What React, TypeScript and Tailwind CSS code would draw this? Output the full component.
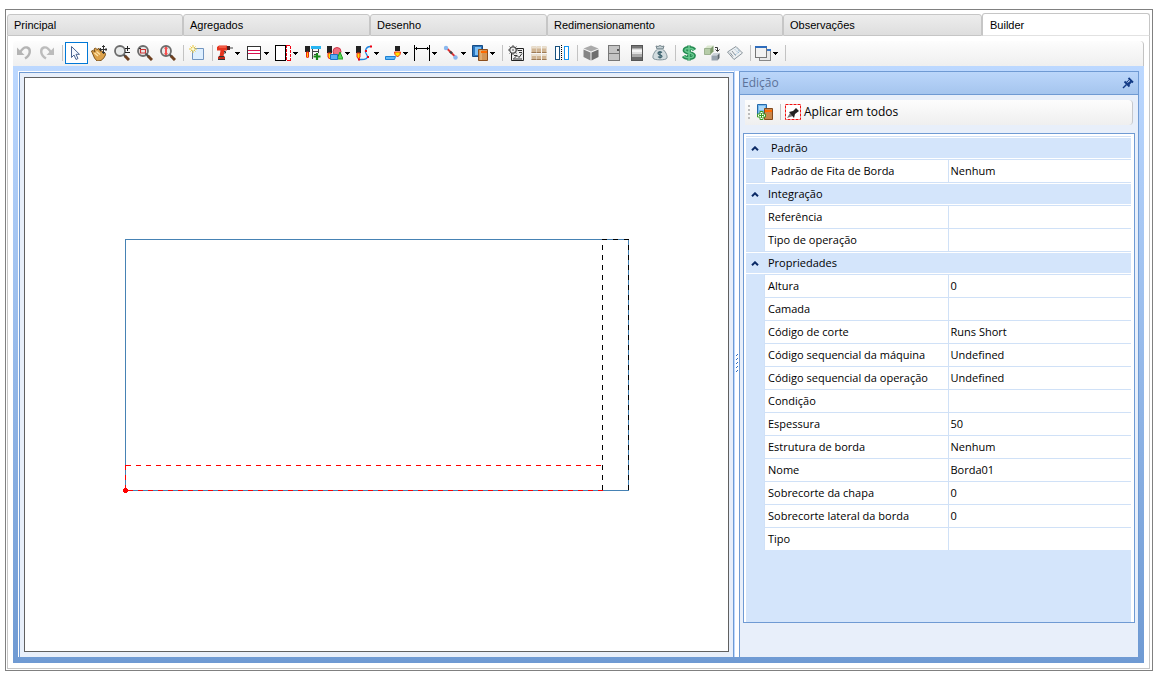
import React from "react";

type Tool = {
    name: string;
    icon?: React.ReactNode;
    menu?: boolean;
    active?: boolean;
};

const Icon = ({ children, crisp }: { children: React.ReactNode; crisp?: boolean }) => (
    <svg
        width="16"
        height="16"
        viewBox="0 0 16 16"
        fill="none"
        className="shrink-0"
        shapeRendering={crisp ? "crispEdges" : "auto"}
        aria-hidden="true"
    >
        {children}
    </svg>
);

const Lens = ({ children }: { children?: React.ReactNode }) => (
    <Icon>
        <path d="M9.5 9.5l2 2" stroke="#444" strokeWidth="2.400" />
        <path d="M11 11l4 4" stroke="#6e4020" strokeWidth="3" />
        <circle cx="6" cy="6" r="5" fill="#e8eaea" stroke="#6c6c6c" strokeWidth="1.800" />
        {children}
    </Icon>
);

// Small black tool head shared by the machining icons
const Head = ({ x, y }: { x: number; y: number }) => (
    <>
        <path d={`M${x} ${y}h5v7h-5z`} fill="#222" />
        <path d={`M${x + 1} ${y + 7}h3v4l-1.5 2l-1.5 -2z`} fill="#fd0" stroke="#f02010" strokeWidth="1" />
    </>
);

const tools: (Tool | null)[] = [
    {
        name: "Desfazer",
        icon: (
            <Icon>
                <path d="M4 7.5C6.500 3 9 2 11 2.500C15 3.500 15 10 9 13.500" stroke="#b4b4b4" strokeWidth="2.400" />
                <path d="M1 2.500v7.500h7.500z" fill="#b4b4b4" />
            </Icon>
        ),
    },
    {
        name: "Refazer",
        icon: (
            <Icon>
                <path d="M12 7.500C9.500 3 7 2 5 2.500C1 3.500 1 10 7 13.500" stroke="#bcbcbc" strokeWidth="2.400" />
                <path d="M15 2.500v7.500h-7.500z" fill="#bcbcbc" />
            </Icon>
        ),
    },
    null,
    {
        name: "Selecionar",
        active: true,
        icon: (
            <Icon>
                <path d="M3.500 1.500v11l2.500-2.500l2 4.500l2-1l-2-4.200h3.500z" fill="#f4f8ff" stroke="#4a6490" />
            </Icon>
        ),
    },
    {
        name: "Mover",
        icon: (
            <Icon>
                <path
                    d="M.5 6l1.500-.5l2 1.500l-1-3l1.500-1l2 2l.5-1.500l1.500.3l.8 2.500l1.700-.5l.7 1.500l2.300.5l.5 2l-1.500 3l-3 2.700l-4 .5l-2.500-3z"
                    fill="#dda24a"
                    stroke="#7f541c"
                />
                <path d="M3.500 8l3.500 3M5.500 6.500l3.500 3" stroke="#ffe3a8" strokeWidth="1.300" />
                <path d="M12.500 .5v8M8.500 4.500h8" stroke="#333" />
                <path d="M11 2l1.500-1.500L14 2M11 7l1.500 1.500L14 7M10 3L8.500 4.500L10 6M14.500 3L16 4.500L14.500 6" stroke="#333" />
            </Icon>
        ),
    },
    {
        name: "Zoom",
        icon: (
            <Lens>
                <path d="M11 3.500h5M13.500 1v5M11 7.500h5" stroke="#222" />
            </Lens>
        ),
    },
    {
        name: "Zoom na janela",
        icon: (
            <Lens>
                <path d="M3.500 4.500h5v3.500h-5z" stroke="#cc3434" strokeWidth="1.200" />
                <path d="M2 3.500h2M8 9h2" stroke="#333" />
            </Lens>
        ),
    },
    {
        name: "Zoom total",
        icon: (
            <Lens>
                <path d="M6 2v8" stroke="#f65050" strokeWidth="2" />
                <path d="M4 4l2-2.500L8 4zM4 8l2 2.500L8 8z" fill="#f65050" />
            </Lens>
        ),
    },
    null,
    {
        name: "Novo",
        icon: (
            <Icon>
                <path d="M3.500 3.500h11v11h-11z" fill="#deefff" stroke="#7295c0" />
                <path d="M4 0v8M0 4h8M1.500 1.500l5 5M6.500 1.500l-5 5" stroke="#e9c63b" />
                <circle cx="4" cy="4" r="1.500" fill="#fffbd0" />
            </Icon>
        ),
    },
    null,
    {
        name: "Furação",
        menu: true,
        icon: (
            <Icon>
                <path d="M0 2l2-1.500h8v5H7.500l-1 6H2.500l1-6H0z" fill="#e5341e" />
                <path d="M2 2h7" stroke="#ff8068" />
                <path d="M10 1h3v4h-3z" fill="#4a2020" />
                <path d="M13 3h3" stroke="#777" strokeWidth="1.400" />
                <path d="M1 11.500h7V15H1z" fill="#c42a1a" />
                <path d="M1 14.500h7M2 11.500h5" stroke="#333" />
                <path d="M7 6.500h1.500v1.500H7" stroke="#333" />
            </Icon>
        ),
    },
    {
        name: "Fita de borda",
        menu: true,
        icon: (
            <Icon crisp>
                <path d="M1.500 1.500h13v13h-13z" fill="#fff" stroke="#333" />
                <path d="M2 5.500h12M2 8.500h12" stroke="#d81050" />
            </Icon>
        ),
    },
    {
        name: "Borda lateral",
        menu: true,
        icon: (
            <Icon crisp>
                <path d="M.5 .5h10v15H.5z" fill="#fff" stroke="#000" />
                <path d="M11.500 .5h4v15h-4z" fill="#fff" stroke="#f00010" strokeDasharray="3 1" />
            </Icon>
        ),
    },
    {
        name: "Adicionar operação",
        icon: (
            <Icon>
                <path d="M0 1h5v6H0z" fill="#222" />
                <path d="M1.500 7h2v5l-1 1l-1-1z" fill="#fc0" stroke="#f02010" />
                <path d="M6 1h10v3H6z" fill="#28b5f2" />
                <path d="M7.500 4v10M13.500 4v4M7 6.500h7M9 9.500h3" stroke="#444" />
                <path d="M12 8v7M8.500 11.500h7" stroke="#188a18" strokeWidth="2.200" />
            </Icon>
        ),
    },
    {
        name: "Formas",
        menu: true,
        icon: (
            <Icon>
                <circle cx="10" cy="6.500" r="4" fill="#f07080" stroke="#d23848" />
                <path d="M10 14l3-7l3 7z" fill="#55d855" stroke="#229b22" />
                <Head x={0} y={1} />
                <path d="M3.500 9.500h7v5h-7z" fill="#5aaef5" stroke="#1b72c5" />
            </Icon>
        ),
    },
    {
        name: "Contorno",
        menu: true,
        icon: (
            <Icon>
                <path d="M2.500 14.500h3c4 0 6-1 6-3c0-2-3-3-2-6c.5-2 2-4 5-4" stroke="#2384dc" strokeWidth="1.300" />
                <Head x={0} y={1} />
                <path d="M2 13.500h2v2H2zM11 11h2v2h-2zM9 5h2v2H9zM14 .5h2v2h-2z" fill="#f00010" />
            </Icon>
        ),
    },
    {
        name: "Rebaixo",
        menu: true,
        icon: (
            <Icon>
                <path d="M.5 11.500h10l-1 3H.5z" fill="#60b8f8" stroke="#1c80d2" />
                <path d="M10 1h5v5h-5z" fill="#222" />
                <path d="M9.500 7h6l-.5 2.500l-2.500 2.500l-2.500-2.500z" fill="#ffe600" stroke="#f03010" />
            </Icon>
        ),
    },
    {
        name: "Cota",
        menu: true,
        icon: (
            <Icon crisp>
                <path d="M.5 0v16M15.500 0v16M1 3.500h14" stroke="#000" />
                <path d="M2.500 2v3M13.500 2v3" stroke="#000" />
            </Icon>
        ),
    },
    {
        name: "Linha",
        menu: true,
        icon: (
            <Icon>
                <path d="M4 3.500l8 8" stroke="#e03030" strokeWidth="1.800" />
                <circle cx="3" cy="3" r="2.200" fill="#8ab8ee" />
                <circle cx="12.500" cy="12.500" r="2.200" fill="#8ab8ee" />
                <path d="M7 6.500l2 2" stroke="#444" strokeWidth="2.400" />
            </Icon>
        ),
    },
    {
        name: "Painéis",
        menu: true,
        icon: (
            <Icon>
                <path d="M.5 .5h10v11H.5z" fill="#2b75bd" stroke="#174c85" />
                <path d="M3 2h6v8H3z" fill="#7fc1f5" />
                <path d="M6.500 4.500h9v11h-9z" fill="#d39555" stroke="#8a4d1c" />
                <path d="M9 5v10" stroke="#efc48d" />
                <path d="M9 7h6" stroke="#ff6a00" strokeWidth="2" />
            </Icon>
        ),
    },
    null,
    {
        name: "Configurar",
        icon: (
            <Icon>
                <path d="M3.500 3.500h12v12h-12z" fill="#eee" stroke="#222" />
                <path d="M10 5.500h4M11 7.500h3M6 13.500l3-3l2 2l3-4M6 10.500h3M5 14h9" stroke="#333" />
                <circle cx="5" cy="5" r="3.200" fill="#eee" stroke="#555" strokeWidth="1.300" />
                <path d="M5 0v2M5 8v2M0 5h2M8 5h2M1.500 1.500l1.300 1.300M7 7l1.500 1.500M8.500 1.500L7 3M1.500 8.500L3 7" stroke="#555" />
                <circle cx="5" cy="5" r="1" fill="#888" />
            </Icon>
        ),
    },
    {
        name: "Blocos",
        icon: (
            <Icon>
                <path d="M.5 1.500h4.500V8H.5zM5.500 1.500H10V8H5.500zM11 1.500h4.500V8H11zM.5 9h4.500v6H.5zM5.500 9H10v6H5.500zM11 9h4.500v6H11z" fill="#d0b594" />
                <path d="M.5 2.500H5M5.500 2.500H10M11 2.500h4.500M.5 10H5M5.500 10H10M11 10h4.500" stroke="#eadfce" strokeWidth="2" />
                <path d="M.5 7.500H5M5.500 7.500H10M11 7.500h4.500M.5 14.500H5M5.500 14.500H10M11 14.500h4.500" stroke="#9c7a56" />
            </Icon>
        ),
    },
    {
        name: "Espelhar",
        icon: (
            <Icon crisp>
                <path d="M1.500 1.500h4v13h-4z" fill="#fff" stroke="#16507e" />
                <path d="M10.500 1.500h4v13h-4z" fill="#fff" stroke="#1493f0" />
                <path d="M7.500 0v16" stroke="#000" strokeDasharray="1 1" />
            </Icon>
        ),
    },
    null,
    {
        name: "Módulo 3D",
        icon: (
            <Icon>
                <path d="M8 .5l7.500 3L8 6.500l-7.500-3z" fill="#aaa" />
                <path d="M.5 4.500l7 3v8l-7-3.500z" fill="#858585" />
                <path d="M8.500 7.500l7-3V12l-7 3.500z" fill="#6f6f6f" />
            </Icon>
        ),
    },
    {
        name: "Porta",
        icon: (
            <Icon crisp>
                <path d="M2.500 .5h11v15h-11z" fill="#c4c4c4" stroke="#777" />
                <path d="M3 8.500h10" stroke="#777" />
                <path d="M11 4h2v2h-2z" fill="#555" />
            </Icon>
        ),
    },
    {
        name: "Perfil",
        icon: (
            <Icon crisp>
                <path d="M2.500 .5h11v15h-11z" fill="#aaa" stroke="#555" />
                <path d="M3 1h10v2H3z" fill="#777" />
                <path d="M3 4h10v5H3z" fill="#dedede" />
                <path d="M3 5h10v2H3z" fill="#f5f5f5" />
                <path d="M3 12h10v3H3z" fill="#696969" />
            </Icon>
        ),
    },
    {
        name: "Custos",
        icon: (
            <Icon>
                <path d="M5 4L4 1l2 .5L8 .5l2 1l2-.5l-1 3z" fill="#c4d0d4" stroke="#76868c" />
                <path d="M5.500 4h5c3 2.500 5 6 4.500 9c-.5 2.500-13.500 2.500-14 0c-.5-3 1.500-6.500 4.500-9z" fill="#d2dcdf" stroke="#81939a" />
                <path d="M10 7.500c-1-1-4-1-4 .7s4 1.300 4 3s-3 1.500-4 .5M8 6v7.500" stroke="#345b68" strokeWidth="1.200" />
            </Icon>
        ),
    },
    null,
    {
        name: "Preço",
        icon: (
            <Icon>
                <path d="M13.500 5C12 2.300 3.500 2 3.500 5.200S13 7.500 13 10.800S4 13.500 2.500 11M8 .5v15" stroke="#248a51" strokeWidth="3.800" />
                <path d="M13 5C11.500 3 4 2.500 4 5.200s8.500 2.600 8.500 5.600S4 13 3 11M8 1v14" stroke="#67c88e" strokeWidth="1.600" />
            </Icon>
        ),
    },
    {
        name: "Substituir",
        icon: (
            <Icon>
                <path d="M.5 3.500l3-3h6l-3 3z" fill="#dbe8cf" />
                <path d="M.5 3.500h6v6h-6z" fill="#b6cca8" stroke="#849d76" strokeWidth=".7" />
                <path d="M6.500 3.500l3-3v6l-3 3z" fill="#7e9b6d" />
                <path d="M7.500 10.500l2-2.500h6l-2 2.500z" fill="#ccd3da" />
                <path d="M7.500 10.500h6v5h-6z" fill="#98a3af" />
                <path d="M13.500 10.500l2-2.500v5l-2 2.500z" fill="#59636d" />
                <path d="M11 2.500h2.500V6M11.500 4.500l2 2l2-2" stroke="#333" />
            </Icon>
        ),
    },
    {
        name: "Etiqueta",
        icon: (
            <Icon>
                <path d="M.5 7L9 1.500L15.500 8L7 14.500z" fill="#edf0f2" stroke="#8c969d" />
                <path d="M3 7.500l3 4M5 6l3.500 4.500" stroke="#8c969d" />
                <path d="M8 4.500l3 3M10 3.500l3 3.500M8 10l4-3" stroke="#7ca8c9" strokeDasharray="1 1" />
            </Icon>
        ),
    },
    null,
    {
        name: "Janelas",
        menu: true,
        icon: (
            <Icon crisp>
                <path d="M4.500 4.500h11v11h-11z" fill="#e8e8e8" stroke="#888" />
                <path d="M12 4h4v2h-4z" fill="#3c78c8" />
                <path d="M.5 1.500h11v11H.5z" fill="#f2f2f2" stroke="#777" />
                <path d="M0 1h12v2H0z" fill="#2f6dbd" />
            </Icon>
        ),
    },
    null,
];

const tabs = [
    { label: "Principal", width: "w-[176px]" },
    { label: "Agregados", width: "w-[187px]" },
    { label: "Desenho", width: "w-[177px]" },
    { label: "Redimensionamento", width: "w-[236px]" },
    { label: "Observações", width: "w-[199px]" },
];

const groups = [
    {
        title: "Padrão",
        indent: true,
        rows: [["Padrão de Fita de Borda", "Nenhum"]],
    },
    {
        title: "Integração",
        rows: [
            ["Referência", ""],
            ["Tipo de operação", ""],
        ],
    },
    {
        title: "Propriedades",
        rows: [
            ["Altura", "0"],
            ["Camada", ""],
            ["Código de corte", "Runs Short"],
            ["Código sequencial da máquina", "Undefined"],
            ["Código sequencial da operação", "Undefined"],
            ["Condição", ""],
            ["Espessura", "50"],
            ["Estrutura de borda", "Nenhum"],
            ["Nome", "Borda01"],
            ["Sobrecorte da chapa", "0"],
            ["Sobrecorte lateral da borda", "0"],
            ["Tipo", ""],
        ],
    },
];

function Separator() {
    return (
        <div className="flex h-[22px] w-[6px] shrink-0 items-center justify-center">
            <span className="h-4 w-px bg-[#c3c3c3]" />
        </div>
    );
}

function ToolButton({ tool }: { tool: Tool }) {
    if (tool.menu) {
        return (
            <button aria-label={tool.name} className="flex h-[22px] w-[29px] shrink-0 items-center gap-[2px] pl-[2px]">
                {tool.icon}
                <svg width="5" height="3" viewBox="0 0 5 3" shapeRendering="crispEdges" aria-hidden="true">
                    <path d="M0 0h5v1H4v1H3v1H2V2H1V1H0z" fill="#000" />
                </svg>
            </button>
        );
    }
    return (
        <button
            aria-label={tool.name}
            className={`flex h-[22px] w-[23px] shrink-0 items-center border pl-[2px] ${
                tool.active ? "border-[#0078d7] bg-white" : "border-transparent"
            }`}
        >
            {tool.icon}
        </button>
    );
}

function Drawing() {
    return (
        <svg width="509" height="257" viewBox="0 0 509 257" fill="none" shapeRendering="crispEdges" aria-label="Peça">
            <path d="M3.500 3.500h503v251h-503z" stroke="#4682b4" />
            {/* edge strip on the right */}
            <path d="M480.500 9v246M506.500 9v246" stroke="#000" strokeDasharray="5 5" />
            <path d="M480 3.500h27" stroke="#000" strokeDasharray="5 6" />
            {/* selected strip at the bottom */}
            <path d="M4 229.500h477M3.500 229v26M6 254.500h475" stroke="#f00" strokeDasharray="5 5" />
            <path d="M2 252h3v1h1v3H5v1H2v-1H1v-3h1z" fill="#f00" />
        </svg>
    );
}

function PropertyGrid() {
    return (
        <table className="w-full table-fixed border-separate border-spacing-0 text-left text-[11px] leading-[16px] text-black">
            <colgroup>
                <col className="w-[18px]" />
                <col />
                <col />
            </colgroup>
            {groups.map((group) => (
                <tbody key={group.title}>
                    <tr className="h-[23px]">
                        <th colSpan={3} className="border-t border-[#d0e1f7] p-0 font-normal">
                            <div className="flex h-[22px] items-center border-y border-white bg-[#d4e5fb]">
                                <button aria-label={`Recolher ${group.title}`} className="flex w-[18px] justify-center">
                                    <svg width="8" height="5" viewBox="0 0 8 5" fill="none" aria-hidden="true">
                                        <path d="M1 4.200L4 1.300l3 2.900" stroke="#0b2a66" strokeWidth="2" />
                                    </svg>
                                </button>
                                <span className={group.indent ? "pl-[7px]" : "pl-1"}>{group.title}</span>
                            </div>
                        </th>
                    </tr>
                    {group.rows.map(([name, value]) => (
                        <tr key={name} className="h-[23px]">
                            <td className="bg-[#d4e5fb] p-0" />
                            <th
                                className={`border-t border-l border-[#d0e1f7] bg-white py-0 pr-0 font-normal whitespace-nowrap ${
                                    group.indent ? "pl-[6px]" : "pl-[3px]"
                                }`}
                            >
                                {name}
                            </th>
                            <td className="border-t border-l border-[#d0e1f7] bg-white py-0 pr-0 pl-[2px]">{value}</td>
                        </tr>
                    ))}
                </tbody>
            ))}
        </table>
    );
}

function EditPanel() {
    return (
        <aside className="flex w-[400px] shrink-0 flex-col border-x border-t border-[#6f9ad3] bg-[#e8effa] font-['Open_Sans','Noto_Sans',sans-serif]">
            <header className="flex h-[23px] items-center justify-between border-b border-[#6f9ad3] bg-linear-to-b from-[#bbd6fa] to-[#a5c5ee] pr-1 pl-[2px]">
                <h2 className="text-[12px] text-[#5c7299]">Edição</h2>
                <button aria-label="Fixar painel">
                    <svg width="12" height="12" viewBox="0 0 12 12" fill="none" aria-hidden="true">
                        <path d="M1 11l3.500-3.500" stroke="#123a85" strokeWidth="1.400" />
                        <path d="M2.500 4.500l5 5M6.500 1l4.500 4.500" stroke="#123a85" strokeWidth="1.800" />
                        <path d="M4 5l4-3l2.500 2.500L7 8.500z" fill="#123a85" />
                        <path d="M5.500 5.500l2.500-2" stroke="#d8e8ff" />
                    </svg>
                </button>
            </header>

            <div className="mx-[5px] mt-[5px] flex h-[25px] items-center rounded-r border-r border-[#c6c8cc] bg-linear-to-b from-[#fdfdfd] to-[#efefef] pb-px">
                <svg width="8" height="16" viewBox="0 0 8 16" shapeRendering="crispEdges" aria-hidden="true">
                    <path d="M3 1h2v2H3zM3 5h2v2H3zM3 9h2v2H3zM3 13h2v2H3z" fill="#bcbcbc" />
                </svg>
                <button aria-label="Adicionar borda" className="flex w-[24px] justify-center">
                    <Icon>
                        <path d="M.5 .5h9v12h-9z" fill="#76b9ee" stroke="#2469aa" />
                        <path d="M2 2h6v4H2z" fill="#acd8f8" />
                        <path d="M7.500 4.500h8v11h-8z" fill="#c9874b" stroke="#85491b" />
                        <path d="M8 7h7" stroke="#ff6a00" strokeWidth="2" />
                        <path d="M3 7.500h3v2.500h2.500v3H6v2.500H3V13H.5v-3H3z" fill="#fff" stroke="#3a9b20" />
                        <path d="M4.500 9v5M2 11.500h5" stroke="#3a9b20" />
                    </Icon>
                </button>
                <Separator />
                <button className="flex items-center gap-[3px] pl-[2px] text-[12px] leading-[16px] text-black">
                    <Icon>
                        <path d="M.5 .5h15v15H.5z" fill="#fff" stroke="#f01010" strokeDasharray="3 1" />
                        <path d="M2 14l3-5l3 3z" fill="#777" />
                        <path d="M4 8l4-1l3-3l3 3l-4 3l-1 4z" fill="#222" />
                    </Icon>
                    Aplicar em todos
                </button>
            </div>

            <div className="mx-[3px] mt-2 mb-[34px] flex-1 border border-[#6f9ad3] bg-white pt-[2px] pr-[3px] pl-[2px]">
                <div className="h-full bg-[#d4e5fb]">
                    <PropertyGrid />
                </div>
            </div>
        </aside>
    );
}

export default function App() {
    return (
        <div className="flex min-h-screen bg-white pt-[9px] pr-[6px] pb-1 pl-[5px] font-['Liberation_Sans',Arial,sans-serif]">
            <div className="flex min-w-0 flex-1 flex-col border border-[#808080] pt-[3px] pr-[2px] pb-px pl-px">
                <div role="tablist" className="flex h-[23px] items-end text-[11px] text-black">
                    {tabs.map((tab) => (
                        <button
                            key={tab.label}
                            role="tab"
                            aria-selected={false}
                            className={`${tab.width} h-[22px] rounded-t-[3px] border border-[#c6c6c6] bg-linear-to-b from-[#ededed] to-[#dedede] pt-px pl-[6px] text-left`}
                        >
                            {tab.label}
                        </button>
                    ))}
                    <button
                        role="tab"
                        aria-selected={true}
                        className="h-[23px] flex-1 rounded-t-[3px] border border-[#c6c6c6] border-b-[#e2e2e2] bg-white pt-[2px] pl-[7px] text-left"
                    >
                        Builder
                    </button>
                </div>

                <div className="flex flex-1 flex-col border-x border-b border-[#c6c6c6] px-[5px] pt-[5px] pb-[5px]">
                    <div
                        role="toolbar"
                        aria-label="Ferramentas"
                        className="flex h-[25px] items-start rounded-t border-r border-[#c3c3c3] bg-linear-to-b from-[#fdfdfd] to-[#efefef] pt-px"
                    >
                        {tools.map((tool, index) =>
                            tool ? <ToolButton key={index} tool={tool} /> : <Separator key={index} />
                        )}
                    </div>

                    <div className="flex flex-1 bg-linear-to-b from-[#bcd8ff] to-[#6f9ad3] px-[5px] pt-[5px] pb-[6px]">
                        <main className="flex min-w-0 flex-1 border-t border-l border-white">
                            <div className="flex min-w-0 flex-1 border-x border-t border-[#6f9ad3] bg-[#e8effa] px-1 pt-1 pb-[5px]">
                                <div className="flex flex-1 items-center justify-center border border-[#606060] bg-white">
                                    <Drawing />
                                </div>
                            </div>
                        </main>
                        <div className="flex w-[5px] shrink-0 items-center border-l border-[#bcd8ff] bg-white">
                            <svg width="4" height="20" viewBox="0 0 4 20" shapeRendering="crispEdges" aria-hidden="true">
                                <path
                                    d="M1 1h1v1H1zM2 0h1v1H2zM1 5h1v1H1zM2 4h1v1H2zM1 9h1v1H1zM2 8h1v1H2zM1 13h1v1H1zM2 12h1v1H2zM1 17h1v1H1zM2 16h1v1H2z"
                                    fill="#2f6fc4"
                                />
                            </svg>
                        </div>
                        <EditPanel />
                    </div>
                </div>
            </div>
        </div>
    );
}
